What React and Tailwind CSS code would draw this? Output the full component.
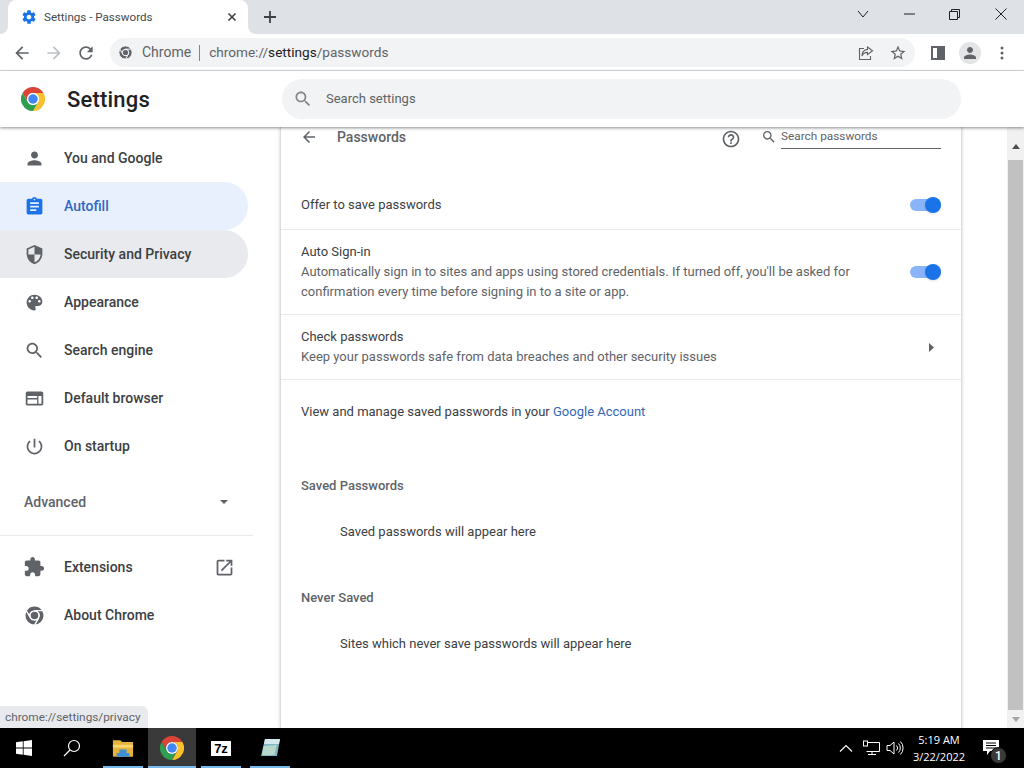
import React from "react";

const P = {
  person: "M12 12c2.21 0 4-1.79 4-4s-1.79-4-4-4-4 1.79-4 4 1.79 4 4 4zm0 2c-2.67 0-8 1.34-8 4v2h16v-2c0-2.66-5.33-4-8-4z",
  assignment: "M19 3h-4.18C14.4 1.84 13.3 1 12 1c-1.3 0-2.4.84-2.82 2H5c-1.1 0-2 .9-2 2v14c0 1.1.9 2 2 2h14c1.1 0 2-.9 2-2V5c0-1.1-.9-2-2-2zm-7 0c.55 0 1 .45 1 1s-.45 1-1 1-1-.45-1-1 .45-1 1-1zm2 14H7v-2h7v2zm3-4H7v-2h10v2zm0-4H7V7h10v2z",
  security: "M12 1L3 5v6c0 5.55 3.84 10.74 9 12 5.16-1.26 9-6.45 9-12V5l-9-4zm0 10.99h7c-.53 4.12-3.28 7.79-7 8.94V12H5V6.3l7-3.11v8.8z",
  palette: "M12 3c-4.97 0-9 4.03-9 9s4.03 9 9 9c.83 0 1.5-.67 1.5-1.5 0-.39-.15-.74-.39-1.01-.23-.26-.38-.61-.38-.99 0-.83.67-1.5 1.5-1.5H16c2.76 0 5-2.24 5-5 0-4.42-4.03-8-9-8zm-5.5 9c-.83 0-1.5-.67-1.5-1.5S5.67 9 6.5 9 8 9.67 8 10.5 7.33 12 6.5 12zm3-4C8.67 8 8 7.33 8 6.5S8.67 5 9.5 5s1.5.67 1.5 1.5S10.33 8 9.5 8zm5 0c-.83 0-1.5-.67-1.5-1.5S13.67 5 14.5 5s1.5.67 1.5 1.5S15.33 8 14.5 8zm3 4c-.83 0-1.5-.67-1.5-1.5S16.67 9 17.5 9s1.5.67 1.5 1.5-.67 1.5-1.5 1.5z",
  search: "M15.5 14h-.79l-.28-.27C15.41 12.59 16 11.11 16 9.5 16 5.91 13.09 3 9.5 3S3 5.91 3 9.5 5.91 16 9.5 16c1.61 0 3.09-.59 4.23-1.57l.27.28v.79l5 4.99L20.49 19l-4.99-5zm-6 0C7.01 14 5 11.99 5 9.5S7.01 5 9.5 5 14 7.01 14 9.5 11.99 14 9.5 14z",
  web: "M20 4H4c-1.1 0-2 .9-2 2v12c0 1.1.9 2 2 2h16c1.1 0 2-.9 2-2V6c0-1.1-.9-2-2-2zM4 18v-5h11v5H4zm16 0h-3.5V9H20v9zM4 11.5V9h11v2.5H4z",
  power: "M13 3h-2v10h2V3zm4.83 2.17l-1.42 1.42C17.99 7.86 19 9.81 19 12c0 3.87-3.13 7-7 7s-7-3.13-7-7c0-2.19 1.01-4.14 2.58-5.42L6.17 5.17C4.23 6.82 3 9.26 3 12c0 4.97 4.03 9 9 9s9-4.03 9-9c0-2.74-1.23-5.18-3.17-6.83z",
  extension: "M20.5 11H19V7c0-1.1-.9-2-2-2h-4V3.5C13 2.12 11.88 1 10.5 1S8 2.12 8 3.5V5H4c-1.1 0-1.99.9-1.99 2v3.8H3.5c1.49 0 2.7 1.21 2.7 2.7s-1.21 2.7-2.7 2.7H2V20c0 1.1.9 2 2 2h3.8v-1.5c0-1.49 1.21-2.7 2.7-2.7 1.49 0 2.7 1.21 2.7 2.7V22H17c1.1 0 2-.9 2-2v-4h1.5c1.38 0 2.5-1.12 2.5-2.5S21.88 11 20.5 11z",
  open: "M19 19H5V5h7V3H5c-1.11 0-2 .9-2 2v14c0 1.1.89 2 2 2h14c1.1 0 2-.9 2-2v-7h-2v7zM14 3v2h3.59l-9.83 9.83 1.41 1.41L19 6.41V10h2V3h-7z",
  back: "M20 11H7.83l5.59-5.59L12 4l-8 8 8 8 1.41-1.41L7.83 13H20v-2z",
  forward: "M4 13h12.17l-5.59 5.59L12 20l8-8-8-8-1.41 1.41L16.17 11H4v2z",
  help: "M11 18h2v-2h-2v2zm1-16C6.48 2 2 6.48 2 12s4.48 10 10 10 10-4.48 10-10S17.52 2 12 2zm0 18c-4.41 0-8-3.59-8-8s3.59-8 8-8 8 3.59 8 8-3.59 8-8 8zm0-14c-2.21 0-4 1.79-4 4h2c0-1.1.9-2 2-2s2 .9 2 2c0 2-3 1.75-3 5h2c0-2.25 3-2.5 3-5 0-2.21-1.79-4-4-4z",
  gear: "M19.43 12.98c.04-.32.07-.64.07-.98s-.03-.66-.07-.98l2.11-1.65c.19-.15.24-.42.12-.64l-2-3.46c-.12-.22-.39-.3-.61-.22l-2.49 1c-.52-.4-1.08-.73-1.69-.98l-.38-2.65C14.46 2.18 14.25 2 14 2h-4c-.25 0-.46.18-.49.42l-.38 2.65c-.61.25-1.17.59-1.69.98l-2.49-1c-.23-.09-.49 0-.61.22l-2 3.46c-.13.22-.07.49.12.64l2.11 1.65c-.04.32-.07.65-.07.98s.03.66.07.98l-2.11 1.65c-.19.15-.24.42-.12.64l2 3.46c.12.22.39.3.61.22l2.49-1c.52.4 1.08.73 1.69.98l.38 2.65c.03.24.24.42.49.42h4c.25 0 .46-.18.49-.42l.38-2.65c.61-.25 1.17-.59 1.69-.98l2.49 1c.23.09.49 0 .61-.22l2-3.46c.12-.22.07-.49-.12-.64l-2.11-1.65zM12 15.5c-1.93 0-3.5-1.57-3.5-3.5s1.57-3.5 3.5-3.5 3.5 1.57 3.5 3.5-1.57 3.5-3.5 3.5z",
  reload: "M17.65 6.35C16.2 4.9 14.21 4 12 4c-4.42 0-7.99 3.58-7.99 8s3.57 8 7.99 8c3.73 0 6.84-2.55 7.73-6h-2.08c-.82 2.33-3.04 4-5.65 4-3.31 0-6-2.69-6-6s2.69-6 6-6c1.66 0 3.14.69 4.22 1.78L13 11h7V4l-2.35 2.35z",
  star: "M22 9.24l-7.19-.62L12 2 9.19 8.63 2 9.24l5.46 4.73L5.82 21 12 17.27 18.18 21l-1.63-7.03L22 9.24zM12 15.4l-3.76 2.27 1-4.28-3.32-2.88 4.38-.38L12 6.1l1.71 4.04 4.38.38-3.32 2.88 1 4.28L12 15.4z",
};

function Icon({ d, size = 24, className = "" }) {
  return (
    <svg width={size} height={size} viewBox="0 0 24 24" fill="currentColor" className={"shrink-0 " + className}>
      <path d={d} />
    </svg>
  );
}

function ChromeLogo({ size = 24, mono, ring = "#ffffff" }) {
  const red = mono || "#db4437";
  const yellow = mono || "#fbc02d";
  const green = mono || "#2e9e4f";
  const blue = mono || "#4285f4";
  const line = mono ? { stroke: ring, strokeWidth: 3 } : {};
  return (
    <svg width={size} height={size} viewBox="0 0 48 48" className="shrink-0">
      <path fill={red} {...line} d="M3.2 12A24 24 0 0 1 44.8 12H24A12 12 0 0 0 13.6 30Z" />
      <path fill={yellow} {...line} d="M44.8 12A24 24 0 0 1 24 48L34.4 30A12 12 0 0 0 24 12Z" />
      <path fill={green} {...line} d="M24 48A24 24 0 0 1 3.2 12L13.6 30A12 12 0 0 0 34.4 30Z" />
      <circle cx="24" cy="24" r="12" fill={ring} />
      <circle cx="24" cy="24" r="9.5" fill={blue} />
    </svg>
  );
}

function NavItem({ icon, label, state, logo }) {
  const bg =
    state === "active"
      ? "bg-[#e8f0fe]"
      : state === "hover"
      ? "bg-[#e8eaed]"
      : "";
  const ic = state === "active" ? "text-[#1a73e8]" : "text-[#5f6368]";
  return (
    <div className={"flex h-12 w-[248px] items-center rounded-r-3xl pl-[22px] " + bg}>
      <div className={"flex w-6 justify-center " + ic}>
        {logo ? <ChromeLogo size={19} mono="#5f6368" /> : <Icon d={icon} size={21} />}
      </div>
      <span className={"ml-[18px] text-[14px] font-medium " + (state === "active" ? "text-[#3367c4]" : "text-[#3c4043]")}>{label}</span>
    </div>
  );
}

function Toggle() {
  return (
    <div className="relative mr-0.5 h-3 w-[31px] rounded-full bg-[#8ab4f8]">
      <div className="absolute -top-0.5 right-0 size-4 rounded-full bg-[#1a73e8] shadow-sm"></div>
    </div>
  );
}

function TaskSlot({ children, active, w = "w-10" }) {
  return (
    <div className={"relative flex h-10 shrink-0 items-center justify-center " + w + (active ? " bg-[#3a3a3a]" : "")}>
      {children}
      <div className="absolute inset-x-0 bottom-0 h-0.5 bg-[#76b9ed]"></div>
    </div>
  );
}

export default function App() {
  return (
    <div className="relative flex h-[768px] w-[1024px] flex-col overflow-hidden bg-white font-['Roboto',sans-serif] text-[13px] text-[#3c4043]">
      {/* Tab strip */}
      <div className="flex h-[34px] shrink-0 items-end bg-[#dee1e6]">
        <div className="relative ml-2 flex h-[34px] w-[240px] items-center rounded-t-lg bg-white pl-[13px] pr-2">
          <div className="absolute -left-2 bottom-0 size-2 bg-white">
            <div className="size-2 rounded-br-lg bg-[#dee1e6]"></div>
          </div>
          <div className="absolute -right-2 bottom-0 size-2 bg-white">
            <div className="size-2 rounded-bl-lg bg-[#dee1e6]"></div>
          </div>
          <Icon d={P.gear} size={16} className="text-[#1a73e8]" />
          <span className="ml-[7px] flex-1 pt-px text-[11.6px] text-[#45494e]">Settings - Passwords</span>
          <svg width="16" height="16" viewBox="0 0 16 16" className="text-[#3c4043]">
            <path d="M4.5 4.5l7 7M11.5 4.5l-7 7" stroke="currentColor" strokeWidth="1.6" />
          </svg>
        </div>
        <div className="ml-3 flex h-[34px] w-5 items-center justify-center text-[#3c4043]">
          <svg width="14" height="14" viewBox="0 0 14 14">
            <path d="M7 1v12M1 7h12" stroke="currentColor" strokeWidth="1.8" />
          </svg>
        </div>
        <div className="ml-auto flex h-[34px] items-start text-[#202124]">
          <div className="flex h-[28px] w-[46px] items-center justify-center">
            <svg width="12" height="8" viewBox="0 0 12 8"><path d="M1 1l5 6 5-6" fill="none" stroke="currentColor" strokeWidth="1" /></svg>
          </div>
          <div className="flex h-[28px] w-[46px] items-center justify-center">
            <svg width="11" height="2" viewBox="0 0 11 2"><path d="M0 1h11" stroke="currentColor" strokeWidth="1" /></svg>
          </div>
          <div className="flex h-[28px] w-[46px] items-center justify-center">
            <svg width="11" height="11" viewBox="0 0 11 11" className="mr-0.5"><path d="M.5 2.5h8v8h-8zM2.5 2.5v-2h8v8h-2" fill="none" stroke="currentColor" strokeWidth="1" /></svg>
          </div>
          <div className="flex h-[28px] w-[46px] items-center justify-center">
            <svg width="12" height="12" viewBox="0 0 12 12"><path d="M.5.5l11 11M11.5.5l-11 11" stroke="currentColor" strokeWidth="1" /></svg>
          </div>
        </div>
      </div>

      {/* Toolbar */}
      <div className="flex h-[37px] shrink-0 items-center border-b border-[#dadce0] bg-white pl-3 pt-px">
        <Icon d={P.back} size={20} className="text-[#5f6368]" />
        <Icon d={P.forward} size={20} className="ml-3 text-[#bdc1c6]" />
        <Icon d={P.reload} size={20} className="ml-3 text-[#5f6368]" />
        <div className="ml-3.5 flex h-[29px] w-[805px] shrink-0 items-center rounded-full bg-[#f1f3f4] pl-[9px] pr-2">
          <ChromeLogo size={13} mono="#5f6368" ring="#f1f3f4" />
          <span className="ml-[10px] text-[14px] text-[#5f6368]">Chrome</span>
          <div className="ml-2 h-4 w-px bg-[#80868b]"></div>
          <span className="ml-[9px] flex-1 text-[13.6px] text-[#5f6368]">
            chrome://<span className="text-[#202124]">settings</span>/passwords
          </span>
          <svg width="16" height="16" viewBox="0 0 16 16" fill="none" stroke="#5f6368" strokeWidth="1.1" className="shrink-0">
            <path d="M6 3.5H1.500v11h11V11" />
            <path d="M9.500 2l5 3.800-5 3.800V7.400C7 7.400 5 8.400 4 11c0-3.600 2-6.200 5.500-6.600z" />
          </svg>
          <Icon d={P.star} size={18} className="ml-[15px] text-[#5f6368]" />
        </div>
        <div className="ml-4 flex h-[14px] w-[14px] shrink-0 border-2 border-[#5f6368] bg-white">
          <div className="ml-auto h-full w-[6px] bg-[#5f6368]"></div>
        </div>
        <div className="ml-[14px] flex size-[22px] shrink-0 items-center justify-center rounded-full bg-[#e3e4e6]">
          <Icon d={P.person} size={18} className="text-[#5f6368]" />
        </div>
        <svg width="4" height="14" viewBox="0 0 4 14" fill="#5f6368" className="ml-[19px] shrink-0">
          <circle cx="2" cy="2" r="1.5" /><circle cx="2" cy="7" r="1.5" /><circle cx="2" cy="12" r="1.5" />
        </svg>
      </div>

      {/* Settings header */}
      <div className="relative z-10 flex h-14 shrink-0 items-center bg-white pl-[21px] shadow-[0_1px_3px_rgba(60,64,67,0.6)]">
        <ChromeLogo size={24} />
        <span className="ml-[22px] w-[215px] text-[22px] font-medium tracking-[0.2px] text-[#202124]">Settings</span>
        <div className="flex h-10 w-[679px] items-center rounded-full bg-[#f1f3f4] pl-[11px]">
          <Icon d={P.search} size={20} className="text-[#80868b]" />
          <span className="ml-[13px] text-[13px] text-[#5f6368]">Search settings</span>
        </div>
      </div>

      {/* Body */}
      <div className="relative flex min-h-0 flex-1">
        <div className="flex w-[280px] shrink-0 flex-col pt-[7px]">
          <NavItem icon={P.person} label="You and Google" />
          <NavItem icon={P.assignment} label="Autofill" state="active" />
          <NavItem icon={P.security} label="Security and Privacy" state="hover" />
          <NavItem icon={P.palette} label="Appearance" />
          <NavItem icon={P.search} label="Search engine" />
          <NavItem icon={P.web} label="Default browser" />
          <NavItem icon={P.power} label="On startup" />
          <div className="mt-[8px] flex h-[48px] w-[248px] items-center justify-between pl-6 pr-5">
            <span className="text-[14px] font-medium text-[#5f6368]">Advanced</span>
            <svg width="8" height="4" viewBox="0 0 8 4" fill="#5f6368"><path d="M0 0h8L4 4z" /></svg>
          </div>
          <div className="mt-[9px] h-px w-[253px] bg-[#e8eaed]"></div>
          <div className="mt-[7px] flex h-12 w-[248px] items-center pl-[22px]">
            <Icon d={P.extension} size={22} className="ml-px text-[#5f6368]" />
            <span className="ml-[19px] flex-1 text-[14px] font-medium text-[#3c4043]">Extensions</span>
            <Icon d={P.open} size={21} className="mr-[13px] text-[#5f6368]" />
          </div>
          <NavItem logo label="About Chrome" />
        </div>

        <div className="flex w-[682px] shrink-0 flex-col border-x border-[#dadce0] bg-white shadow-[0_0_3px_rgba(60,64,67,0.25)]">
          <div className="flex h-[22px] shrink-0 items-start pl-[19px] pr-5">
            <Icon d={P.back} size={18} className="mt-px text-[#5f6368]" />
            <span className="ml-[19px] flex-1 text-[14px] font-medium text-[#5f6368]">Passwords</span>
            <Icon d={P.help} size={20} className="mt-0.5 text-[#5f6368]" />
            <Icon d={P.search} size={16} className="ml-5 mt-0.5 text-[#5f6368]" />
            <div className="ml-[4px] h-[22px] w-40 border-b border-[#5f6368] pt-px text-[11.8px] leading-[16px] text-[#5f6368]">Search passwords</div>
          </div>

          <div className="mt-8 flex h-[49px] shrink-0 items-center justify-between border-b border-[#e8eaed] pl-5 pr-[18px]">
            <span className="text-[#3c4043]">Offer to save passwords</span>
            <Toggle />
          </div>
          <div className="flex h-[85px] shrink-0 items-center justify-between border-b border-[#e8eaed] pl-5 pr-[18px]">
            <div className="leading-5">
              <div className="text-[#3c4043]">Auto Sign-in</div>
              <div className="w-[580px] text-[#5f6368]">Automatically sign in to sites and apps using stored credentials. If turned off, you'll be asked for confirmation every time before signing in to a site or app.</div>
            </div>
            <Toggle />
          </div>
          <div className="flex h-[65px] shrink-0 items-center justify-between border-b border-[#e8eaed] pl-5 pr-[27px]">
            <div className="leading-5">
              <div className="text-[#3c4043]">Check passwords</div>
              <div className="text-[#5f6368]">Keep your passwords safe from data breaches and other security issues</div>
            </div>
            <svg width="5" height="9" viewBox="0 0 5 9" fill="#5f6368"><path d="M0 0l5 4.500L0 9z" /></svg>
          </div>
          <div className="mt-[22px] pl-5 leading-5 text-[#3c4043]">
            View and manage saved passwords in your <span className="text-[#3367b8]">Google Account</span>
          </div>
          <div className="mt-[54px] pl-5 font-medium leading-5 text-[#5f6368]">Saved Passwords</div>
          <div className="mt-[26px] pl-[59px] leading-5 text-[#3c4043]">Saved passwords will appear here</div>
          <div className="mt-[46px] pl-5 font-medium leading-5 text-[#5f6368]">Never Saved</div>
          <div className="mt-[26px] pl-[59px] leading-5 text-[#3c4043]">Sites which never save passwords will appear here</div>
        </div>

        <div className="flex-1"></div>

        {/* Scrollbar */}
        <div className="flex w-[17px] shrink-0 flex-col items-center bg-[#f1f1f1]">
          <div className="flex h-[33px] w-full shrink-0 items-center justify-center pt-[6px]">
            <svg width="8" height="5" viewBox="0 0 8 5" fill="#505050"><path d="M0 5h8L4 0z" /></svg>
          </div>
          <div className="h-[550px] w-[15px] shrink-0 bg-[#c1c1c1]"></div>
          <div className="flex flex-1 items-center justify-center">
            <svg width="8" height="5" viewBox="0 0 8 5" fill="#a3a3a3"><path d="M0 0h8L4 5z" /></svg>
          </div>
        </div>

        {/* Status bubble */}
        <div className="absolute bottom-0 left-0 flex h-[22px] w-[148px] items-center rounded-tr-md bg-[#e8eaed] pl-[5px] pt-0.5 text-[11.8px] text-[#5f6368]">
          chrome://settings/privacy
        </div>
      </div>

      {/* Taskbar */}
      <div className="flex h-10 shrink-0 items-center bg-black text-white">
        <div className="flex h-10 w-12 items-center justify-center">
          <svg width="16" height="16" viewBox="0 0 16 16" fill="#fff">
            <path d="M0 2.300l6.800-1v6.300H0zM7.600 1.200L16 0v7.600H7.600zM0 8.400h6.800v6.300l-6.800-1zM7.600 8.400H16V16l-8.400-1.200z" />
          </svg>
        </div>
        <div className="flex h-10 w-12 items-center justify-center">
          <svg width="18" height="18" viewBox="0 0 18 18" fill="none" stroke="#fff" strokeWidth="1.2">
            <circle cx="11" cy="7" r="5.500" /><path d="M7 11l-6 6" />
          </svg>
        </div>
        <div className="w-[7px] shrink-0"></div>
        <TaskSlot>
          <svg width="22" height="19" viewBox="0 0 24 20">
            <path fill="#e8b23a" d="M1 1h8l2 2h12v15a1 1 0 0 1-1 1H2a1 1 0 0 1-1-1z" />
            <path fill="#f7d774" d="M1 6h22v3H1z" />
            <path fill="#3f8fd2" d="M8 11h8v4h3v4H5v-4h3z" />
          </svg>
        </TaskSlot>
        <div className="w-[5px] shrink-0"></div>
        <TaskSlot active w="w-12"><ChromeLogo size={24} /></TaskSlot>
        <div className="w-[5px] shrink-0"></div>
        <TaskSlot>
          <div className="flex h-[15px] w-5 items-center justify-center bg-white font-['Liberation_Sans',sans-serif] text-[13px] font-bold leading-none text-black">7z</div>
        </TaskSlot>
        <div className="w-[9px] shrink-0"></div>
        <TaskSlot>
          <svg width="22" height="22" viewBox="0 0 22 22">
            <path fill="#7fb6c9" d="M6 2h15l-3 17H2z" />
            <path fill="#d5eaf0" d="M6 2h15l-1 5H5z" />
            <path fill="#b8d8c9" d="M4.500 9l13-1-2 10H3z" />
          </svg>
        </TaskSlot>

        <div className="ml-auto flex h-10 items-center">
          <svg width="14" height="8" viewBox="0 0 14 8" fill="none" stroke="#fff" strokeWidth="1.1"><path d="M1 7.500l6-6 6 6" /></svg>
          <svg width="18" height="16" viewBox="0 0 18 16" fill="none" stroke="#fff" strokeWidth="1" className="ml-[9px]">
            <path d="M4.500 2.500h13v9h-13M10 11.500v3M6 14.500h8" />
            <rect x="1.500" y="1" width="4" height="5" fill="#000" />
          </svg>
          <svg width="18" height="16" viewBox="0 0 18 16" fill="none" stroke="#fff" strokeWidth="1" className="ml-[6px]">
            <path d="M1 5.500h3L8 2v12L4 10.500H1zM10.500 5.500a3.500 3.500 0 0 1 0 5M12.500 3.500a6.500 6.500 0 0 1 0 9M14.500 1.500a9.500 9.500 0 0 1 0 13" />
          </svg>
          <div className="ml-[6px] flex w-[58px] flex-col items-center font-['Open_Sans',sans-serif] text-[11px] leading-[17px]">
            <span>5:19 AM</span>
            <span>3/22/2022</span>
          </div>
          <div className="relative ml-[15px] mr-[17px] h-10 w-6">
            <svg width="16" height="15" viewBox="0 0 16 15" className="absolute left-0 top-[12px]">
              <path fill="#fff" d="M0 0h16v11H7l-3 4v-4H0z" />
              <path d="M3 3h10M3 5.500h10M3 8h10" stroke="#000" strokeWidth="1" />
            </svg>
            <div className="absolute left-[7px] top-[19px] flex size-[17px] items-center justify-center rounded-full border border-black bg-[#3a3a3a] text-[12px] font-medium text-white">1</div>
          </div>
        </div>
      </div>
    </div>
  );
}
